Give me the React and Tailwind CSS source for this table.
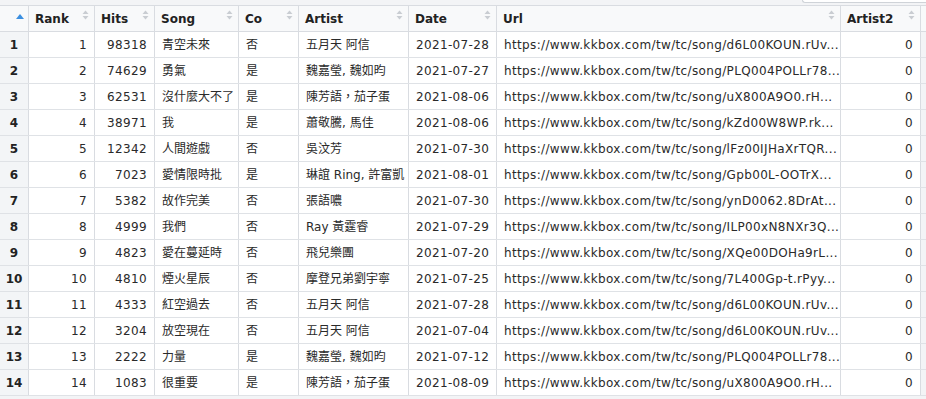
import React from "react";

const rows = [
  [1, 98318, "青空未來", "否", "五月天 阿信", "2021-07-28", "d6L00KOUN.rUv..."],
  [2, 74629, "勇氣", "是", "魏嘉瑩, 魏如昀", "2021-07-27", "PLQ004POLLr78..."],
  [3, 62531, "沒什麼大不了", "是", "陳芳語，茄子蛋", "2021-08-06", "uX800A9O0.rH..."],
  [4, 38971, "我", "是", "蕭敬騰, 馬佳", "2021-08-06", "kZd00W8WP.rk..."],
  [5, 12342, "人間遊戲", "否", "吳汶芳", "2021-07-30", "lFz00IJHaXrTQR..."],
  [6, 7023, "愛情限時批", "是", "琳誼 Ring, 許富凱", "2021-08-01", "Gpb00L-OOTrX..."],
  [7, 5382, "故作完美", "否", "張語噥", "2021-07-30", "ynD0062.8DrAt..."],
  [8, 4999, "我們", "否", "Ray 黃霆睿", "2021-07-29", "ILP00xN8NXr3Q..."],
  [9, 4823, "愛在蔓延時", "否", "飛兒樂團", "2021-07-20", "XQe00DOHa9rL..."],
  [10, 4810, "煙火星辰", "否", "摩登兄弟劉宇寧", "2021-07-25", "7L400Gp-t.rPyy..."],
  [11, 4333, "紅空過去", "否", "五月天 阿信", "2021-07-28", "d6L00KOUN.rUv..."],
  [12, 3204, "放空現在", "否", "五月天 阿信", "2021-07-04", "d6L00KOUN.rUv..."],
  [13, 2222, "力量", "是", "魏嘉瑩, 魏如昀", "2021-07-12", "PLQ004POLLr78..."],
  [14, 1083, "很重要", "是", "陳芳語，茄子蛋", "2021-08-09", "uX800A9O0.rH..."],
];

const GRID =
  "grid grid-cols-[29px_66px_60px_84px_60px_110px_88px_344px_80px_5px]";

function SortIcon() {
  return (
    <svg width="7" height="10" viewBox="0 0 7 10" className="shrink-0 mt-[4px]">
      <polygon points="3.5,0.5 6.5,4 0.5,4" fill="#c9cdd2" />
      <polygon points="0.5,6 6.5,6 3.5,9.5" fill="#c9cdd2" />
    </svg>
  );
}

function Head({ label }) {
  return (
    <div className="flex justify-between items-start h-[25px] pl-[6px] pr-[5px] border-r border-[#d9dce1]">
      <span className="self-center font-bold text-[12px] text-[#222]">{label}</span>
      <SortIcon />
    </div>
  );
}

const cell = "h-[25px] flex items-center border-r border-[#d9dce1] overflow-hidden whitespace-nowrap";

export default function App() {
  return (
    <div
      className="w-[926px] h-[399px] overflow-hidden bg-[#f3f4f6] text-[12px] text-[#2a2a2a]"
      style={{ fontFamily: '"DejaVu Sans", "Noto Sans CJK TC", sans-serif' }}
    >
      <div className="h-[5px] flex justify-end">
        <div className="w-[124px] h-[3px] bg-white border-l border-b border-[#cfd3d8] rounded-bl-[3px]" />
      </div>
      <div className={`${GRID} bg-[#f8f9fa] border-t border-b border-[#d9dce1]`}>
        <div className="h-[25px] flex items-start justify-end pr-[4px] border-r border-[#d9dce1]">
          <svg width="8" height="5" viewBox="0 0 8 5" className="mt-[8px]">
            <polygon points="4,0 8,5 0,5" fill="#3b8fe0" />
          </svg>
        </div>
        <Head label="Rank" />
        <Head label="Hits" />
        <Head label="Song" />
        <Head label="Co" />
        <Head label="Artist" />
        <Head label="Date" />
        <Head label="Url" />
        <Head label="Artist2" />
        <div />
      </div>
      {rows.map((r) => (
        <div key={r[0]} className={`${GRID} border-b border-[#dfe2e6] tracking-[0.35px]`}>
          <div className={`${cell} justify-center bg-[#f3f5f7] font-bold text-[#222] tracking-normal`}>{r[0]}</div>
          <div className={`${cell} justify-end pr-[7px] bg-white`}>{r[0]}</div>
          <div className={`${cell} justify-end pr-[7px] bg-white`}>{r[1]}</div>
          <div className={`${cell} pl-[7px] bg-white tracking-normal`}>{r[2]}</div>
          <div className={`${cell} pl-[7px] bg-white`}>{r[3]}</div>
          <div className={`${cell} pl-[7px] bg-white tracking-normal`}>{r[4]}</div>
          <div className={`${cell} pl-[7px] bg-white`}>{r[5]}</div>
          <div className={`${cell} pl-[7px] bg-white`}>
            {"https://www.kkbox.com/tw/tc/song/" + r[6]}
          </div>
          <div className={`${cell} justify-end pr-[7px] bg-white`}>0</div>
          <div className="bg-[#f3f4f6]" />
        </div>
      ))}
    </div>
  );
}
